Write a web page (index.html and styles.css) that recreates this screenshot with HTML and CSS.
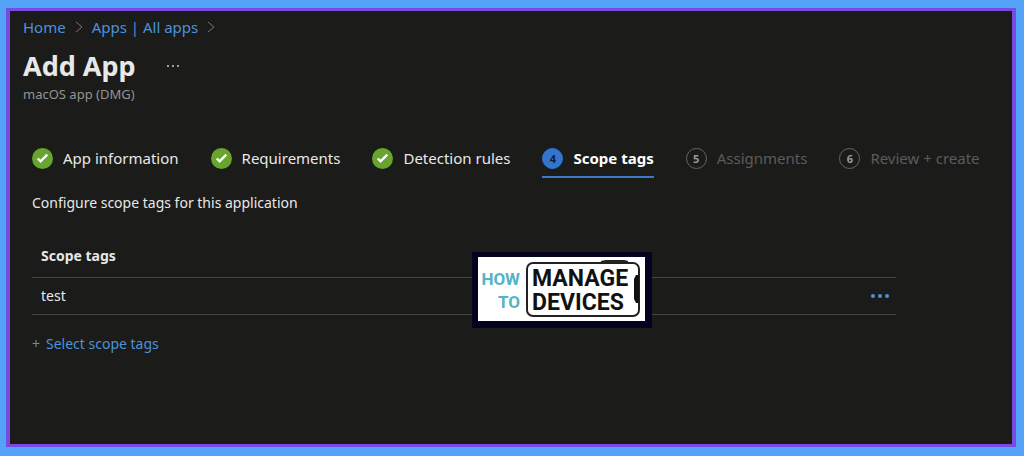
FILE: index.html
```html
<!DOCTYPE html>
<html lang="en">
<head>
    <meta charset="UTF-8">
    <title>Add App</title>
    <link rel="stylesheet" href="styles.css">
</head>
<body>
<div class="page">
    <nav class="breadcrumb">
        <a href="#">Home</a>
        <svg class="chevron" viewBox="0 0 8 12"><path d="M1 1l6 5-6 5"/></svg>
        <a href="#">Apps | All apps</a>
        <svg class="chevron" viewBox="0 0 8 12"><path d="M1 1l6 5-6 5"/></svg>
    </nav>
    <div class="title">
        <h1>Add App</h1>
        <button class="more" aria-label="More actions">
            <svg width="14" height="4" viewBox="0 0 14 4"><circle cx="2" cy="2" r="1"/><circle cx="7" cy="2" r="1"/><circle cx="12" cy="2" r="1"/></svg>
        </button>
    </div>
    <p class="subtitle">macOS app (DMG)</p>

    <ol class="steps">
        <li class="step">
            <svg class="badge done" viewBox="0 0 22 22"><circle cx="11" cy="11" r="11"/><path d="M6 11l3 3 7-7"/></svg>
            <span>App information</span>
        </li>
        <li class="step">
            <svg class="badge done" viewBox="0 0 22 22"><circle cx="11" cy="11" r="11"/><path d="M6 11l3 3 7-7"/></svg>
            <span>Requirements</span>
        </li>
        <li class="step">
            <svg class="badge done" viewBox="0 0 22 22"><circle cx="11" cy="11" r="11"/><path d="M6 11l3 3 7-7"/></svg>
            <span>Detection rules</span>
        </li>
        <li class="step current">
            <span class="badge number">4</span>
            <span>Scope tags</span>
        </li>
        <li class="step disabled">
            <span class="badge number">5</span>
            <span>Assignments</span>
        </li>
        <li class="step disabled">
            <span class="badge number">6</span>
            <span>Review + create</span>
        </li>
    </ol>

    <div class="content">
        <p class="intro">Configure scope tags for this application</p>
        <table class="tags">
            <thead>
            <tr>
                <th colspan="2">Scope tags</th>
            </tr>
            </thead>
            <tbody>
            <tr>
                <td>test</td>
                <td class="actions">
                    <button class="more" aria-label="Row actions">
                        <svg width="20" height="6" viewBox="0 0 20 6"><circle cx="3" cy="3" r="2"/><circle cx="10" cy="3" r="2"/><circle cx="17" cy="3" r="2"/></svg>
                    </button>
                </td>
            </tr>
            </tbody>
        </table>
        <a class="select" href="#"><span>+</span><span>Select scope tags</span></a>
    </div>

    <!-- site watermark, floats over the table -->
    <svg class="watermark" width="180" height="76" viewBox="0 0 180 76" role="img" aria-label="How to manage devices">
        <rect width="180" height="76" fill="#04031f"/>
        <rect x="6" y="5" width="167" height="64" fill="#fff"/>
        <g class="how" text-anchor="end">
            <text x="48" y="33">HOW</text>
            <text x="48" y="56">TO</text>
        </g>
        <rect x="55" y="11" width="112" height="53" rx="6" fill="none" stroke="#222" stroke-width="2"/>
        <path d="M129 10l5-1h18l4 1" fill="none" stroke="#222" stroke-width="2"/>
        <path d="M167 23h-3l-2 4v20l2 4h3z" fill="#111"/>
        <g class="manage">
            <text x="60" y="34">MANAGE</text>
            <text x="60" y="58">DEVICES</text>
        </g>
    </svg>
</div>
</body>
</html>
```

FILE: styles.css
```css
* {
    box-sizing: border-box;
}

body {
    margin: 0;
    min-height: 100vh;
    padding: 8px 8px 9px 6px;
    display: flex;
    background: #54a3f9;
    color: #e8e8e8;
    font-family: "Noto Sans", "Open Sans", sans-serif;
    font-size: 15px;
    line-height: 20px;
}

h1, p, ol {
    margin: 0;
    padding: 0;
}

a {
    color: #4c92dc;
    text-decoration: none;
}

button {
    display: flex;
    border: 0;
    padding: 0;
    background: none;
    cursor: pointer;
}

.page {
    position: relative;
    flex: 1;
    padding: 6px 24px 24px 13px;
    border: 3px solid #784ce0;
    border-left-width: 4px;
    border-right-width: 4px;
    background: #1b1b1a;
}

.breadcrumb {
    display: flex;
    align-items: center;
    gap: 9px;
}
.chevron {
    width: 8px;
    height: 12px;
    fill: none;
    stroke: #777;
}

.title {
    display: flex;
    align-items: center;
    gap: 30px;
    margin-top: 11px;
}
h1 {
    font-size: 27px;
    line-height: 36px;
}
.more {
    fill: #ccc;
}
.subtitle {
    color: #949494;
    font-size: 13px;
}

.steps {
    display: flex;
    gap: 32px;
    margin: 36px 0 0 9px;
    list-style: none;
}
.step {
    display: flex;
    align-items: center;
    gap: 10px;
    height: 38px;
    border-bottom: 2px solid transparent;
    white-space: nowrap;
}
.badge {
    width: 21px;
    height: 21px;
}
.done circle {
    fill: #67a52f;
}
.done path {
    fill: none;
    stroke: #fff;
    stroke-width: 2.5;
}
.number {
    border: 1px solid #666;
    border-radius: 50%;
    font-size: 11px;
    font-weight: bold;
    line-height: 19px;
    text-align: center;
}
.current {
    border-color: #3c78c4;
    color: #fff;
    font-weight: bold;
}
.current .number {
    border-color: #3374cf;
    background: #3374cf;
    color: #101c30;
}
.disabled {
    color: #5c5c5c;
}
.disabled .number {
    color: #999;
}

.content {
    margin-left: 9px;
    font-size: 14px;
}
.intro {
    margin-top: 15px;
}
.tags {
    width: calc(100% - 92px);
    margin: 22px 0 19px;
    border-collapse: collapse;
}
.tags th, .tags td {
    height: 37px;
    padding: 0 9px;
    border-bottom: 1px solid #444;
    text-align: left;
}
.tags th {
    height: 42px;
}
.actions .more {
    margin-left: auto;
    fill: #4c92dc;
}
.tags .actions {
    padding-right: 6px;
}
.select {
    display: inline-flex;
    gap: 6px;
}

.watermark {
    position: absolute;
    top: 241px;
    left: 462px;
}
.watermark text {
    font-family: Roboto, sans-serif;
    font-weight: bold;
}
.how {
    fill: #52b4c6;
    font-size: 17px;
}
.manage {
    fill: #111;
    font-size: 23px;
}
```
